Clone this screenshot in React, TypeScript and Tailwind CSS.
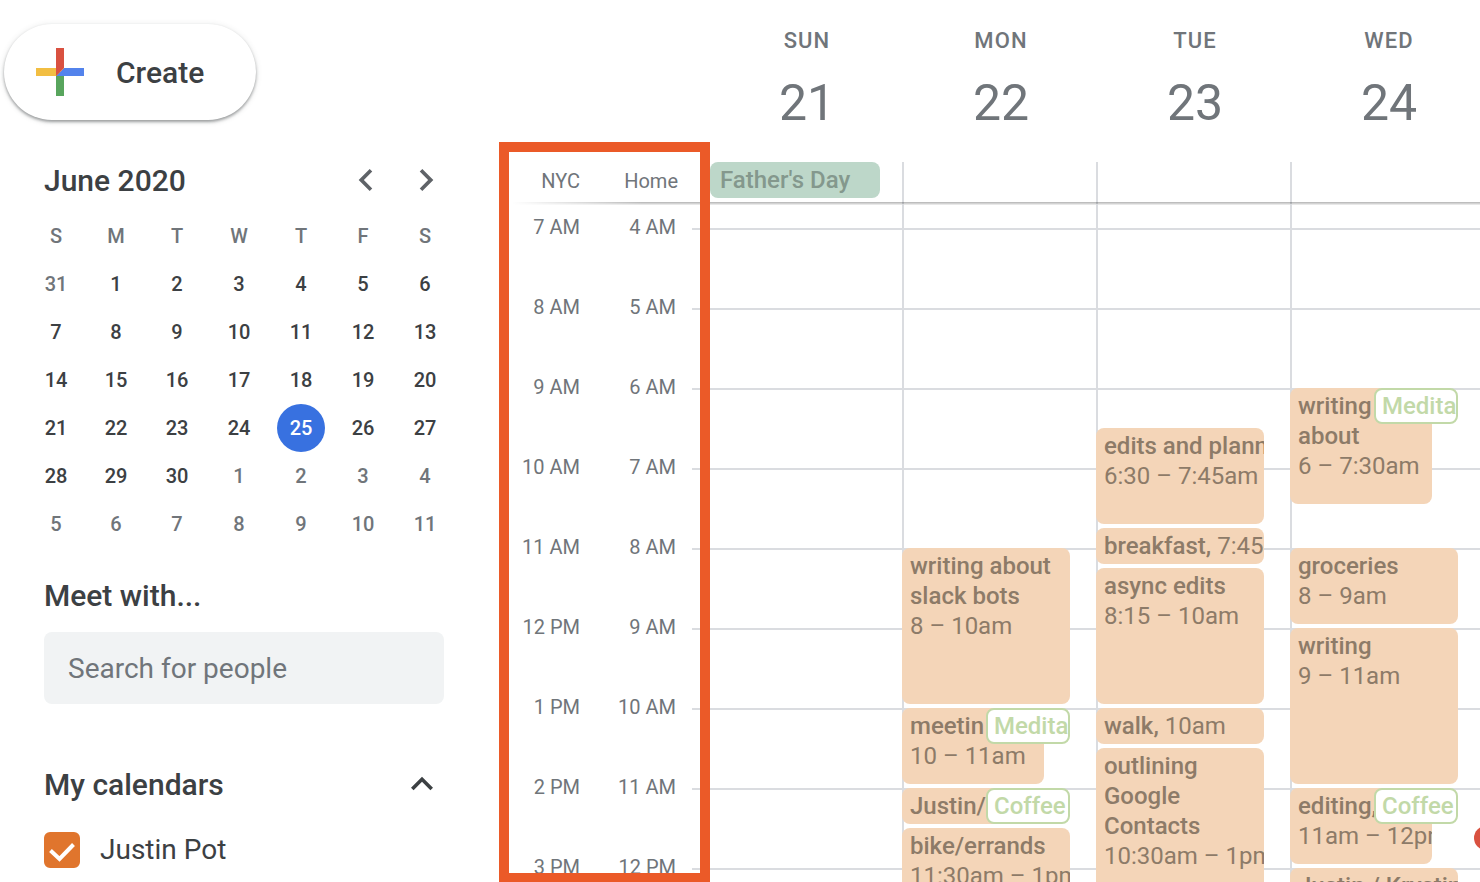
import { useState } from "react";

type CalendarEvent = {
  title: string;
  time?: string;
  start: number;
  end: number;
  half?: boolean;
  nowrap?: boolean;
  inline?: boolean;
  invite?: boolean;
};

type Day = {
  name: string;
  date: number;
  allDay?: string;
  now?: number;
  events: CalendarEvent[];
};

const HOUR = 80;
const FIRST_HOUR = 4;
const TOP_GAP = 24;

const days: Day[] = [
  { name: "SUN", date: 21, allDay: "Father's Day", events: [] },
  {
    name: "MON",
    date: 22,
    events: [
      { title: "writing about slack bots", time: "8 – 10am", start: 8, end: 10 },
      { title: "meetin", time: "10 – 11am", start: 10, end: 11, half: true, nowrap: true },
      { title: "Medita", start: 10, end: 10.5, invite: true },
      { title: "Justin/", start: 11, end: 11.5, half: true, nowrap: true },
      { title: "Coffee", start: 11, end: 11.5, invite: true },
      { title: "bike/errands", time: "11:30am – 1pm", start: 11.5, end: 13 },
    ],
  },
  {
    name: "TUE",
    date: 23,
    events: [
      { title: "edits and planning", time: "6:30 – 7:45am", start: 6.5, end: 7.75, nowrap: true },
      { title: "breakfast", time: "7:45am", start: 7.75, end: 8.25, inline: true },
      { title: "async edits", time: "8:15 – 10am", start: 8.25, end: 10 },
      { title: "walk", time: "10am", start: 10, end: 10.5, inline: true },
      { title: "outlining Google Contacts", time: "10:30am – 1pm", start: 10.5, end: 13 },
    ],
  },
  {
    name: "WED",
    date: 24,
    now: 11.625,
    events: [
      { title: "writing about", time: "6 – 7:30am", start: 6, end: 7.5, half: true },
      { title: "Medita", start: 6, end: 6.5, invite: true },
      { title: "groceries", time: "8 – 9am", start: 8, end: 9 },
      { title: "writing", time: "9 – 11am", start: 9, end: 11 },
      { title: "editing,", time: "11am – 12pm", start: 11, end: 12, half: true, nowrap: true },
      { title: "Coffee", start: 11, end: 11.5, invite: true },
      { title: "Justin / Krystina", start: 12, end: 13, nowrap: true },
    ],
  },
];

const hours = [
  ["7 AM", "4 AM"],
  ["8 AM", "5 AM"],
  ["9 AM", "6 AM"],
  ["10 AM", "7 AM"],
  ["11 AM", "8 AM"],
  ["12 PM", "9 AM"],
  ["1 PM", "10 AM"],
  ["2 PM", "11 AM"],
  ["3 PM", "12 PM"],
];

const weeks = [
  [31, 1, 2, 3, 4, 5, 6],
  [7, 8, 9, 10, 11, 12, 13],
  [14, 15, 16, 17, 18, 19, 20],
  [21, 22, 23, 24, 25, 26, 27],
  [28, 29, 30, 1, 2, 3, 4],
  [5, 6, 7, 8, 9, 10, 11],
];

const topFor = (hour: number) => TOP_GAP + (hour - FIRST_HOUR) * HOUR;

const PlusIcon = () => (
  <svg className="size-12" viewBox="6 6 24 24" aria-hidden="true">
    <path fill="#58a55d" d="M16 16v14h4V20z" />
    <path fill="#5383ec" d="M30 16H20l-4 4h14z" />
    <path fill="#f2be42" d="M6 16v4h10l4-4z" />
    <path fill="#d95140" d="M20 16V6h-4v14z" />
  </svg>
);

const Chevron = ({ d }: { d: string }) => (
  <svg className="size-[22px]" viewBox="6 6 12 12" fill="currentColor" aria-hidden="true">
    <path d={d} />
  </svg>
);

const MiniCalendar = () => (
  <table className="ml-[26px] w-[430px] table-fixed text-xl font-medium">
    <colgroup>
      <col span={2} className="w-[60px]" />
      <col span={5} className="w-[62px]" />
    </colgroup>
    <thead>
      <tr className="h-12 text-[#70757a]">
        {["S", "M", "T", "W", "T", "F", "S"].map((d, i) => (
          <th key={i} scope="col" className="p-0 font-medium">
            {d}
          </th>
        ))}
      </tr>
    </thead>
    <tbody>
      {weeks.map((week, w) => (
        <tr key={w} className="h-12">
          {week.map((day) => {
            const outside = (w === 0 && day > 20) || (w > 3 && day < 20);
            const today = !outside && day === 25;
            return (
              <td key={day} className="p-0 text-center">
                <button
                  className={
                    today
                      ? "size-12 rounded-full bg-[#3871e0] text-white"
                      : outside
                        ? "size-12 rounded-full text-[#70757a]"
                        : "size-12 rounded-full text-[#3c4043]"
                  }
                >
                  {day}
                </button>
              </td>
            );
          })}
        </tr>
      ))}
    </tbody>
  </table>
);

const Sidebar = () => {
  const [checked, setChecked] = useState(true);

  return (
    <aside className="w-[500px] shrink-0 pt-6 text-[#3c4043]">
      <button className="ml-1 flex h-24 w-[252px] items-center gap-8 rounded-full bg-white pl-8 text-[30px] font-medium shadow-[0_2px_3px_rgba(60,64,67,0.45),0_1px_6px_rgba(60,64,67,0.15)]">
        <PlusIcon />
        Create
      </button>

      <div className="mt-10 mr-14 ml-11 flex h-10 items-center justify-between">
        <h2 className="text-[30px] font-medium">June 2020</h2>
        <div className="flex gap-[38px] pr-[7px] text-[#5f6368]">
          <button aria-label="Previous month">
            <Chevron d="M15.41 7.41 14 6l-6 6 6 6 1.41-1.41L10.83 12z" />
          </button>
          <button aria-label="Next month">
            <Chevron d="M10 6 8.59 7.41 13.17 12l-4.58 4.59L10 18l6-6z" />
          </button>
        </div>
      </div>

      <div className="mt-3">
        <MiniCalendar />
      </div>

      <div className="mt-7 mr-14 ml-11">
        <label htmlFor="people" className="block text-[30px] leading-10 font-medium">
          Meet with...
        </label>
        <input
          id="people"
          type="text"
          placeholder="Search for people"
          className="mt-4 h-[72px] w-full rounded-lg bg-[#f1f3f4] px-6 text-[28px] outline-none placeholder:text-[#70757a]"
        />

        <div className="mt-[60px] flex h-10 items-center justify-between pr-[11px]">
          <h2 className="text-[30px] font-medium">My calendars</h2>
          <button aria-label="Collapse my calendars">
            <Chevron d="m12 8-6 6 1.41 1.41L12 10.83l4.59 4.58L18 14z" />
          </button>
        </div>

        <label className="mt-[26px] flex h-10 items-center gap-5 text-[28px]">
          <span className="relative size-9">
            <input
              type="checkbox"
              checked={checked}
              onChange={() => setChecked(!checked)}
              className="block size-9 appearance-none rounded-md border-4 border-[#e0752d] checked:bg-[#e0752d]"
            />
            {checked && (
              <svg
                className="pointer-events-none absolute inset-0 size-9"
                viewBox="0 0 36 36"
                fill="none"
                stroke="#fff"
                strokeWidth="4"
                aria-hidden="true"
              >
                <path d="M6.500 18.500 15.500 27 29.500 12.500" />
              </svg>
            )}
          </span>
          Justin Pot
        </label>
      </div>
    </aside>
  );
};

const EventBlock = ({ event }: { event: CalendarEvent }) => {
  const style = { top: topFor(event.start), height: (event.end - event.start) * HOUR - 4 };

  if (event.invite) {
    return (
      <button
        style={style}
        className="absolute right-[26px] w-[84px] overflow-hidden rounded-lg border-2 border-[#c2d9a8] bg-white pl-1.5 text-left leading-[30px] font-medium whitespace-nowrap text-[#c2d9a8]"
      >
        {event.title}
      </button>
    );
  }

  return (
    <button
      style={style}
      className={`absolute left-0 flex flex-col items-start overflow-hidden rounded-lg bg-[#f4d5b8] py-[3px] pl-2 text-left leading-[30px] text-[#8d7b68] ${
        event.half ? "right-[52px]" : "right-[26px]"
      }`}
    >
      {event.inline ? (
        <span className="whitespace-nowrap">
          <span className="font-medium">{event.title},</span> {event.time}
        </span>
      ) : (
        <>
          <span className={event.nowrap ? "font-medium whitespace-nowrap" : "font-medium"}>
            {event.title}
          </span>
          <span className="whitespace-nowrap">{event.time}</span>
        </>
      )}
    </button>
  );
};

const WeekView = () => (
  <main className="relative flex min-w-0 flex-1 flex-col">
    <header className="relative flex text-[#70757a]">
      <div className="flex w-52 shrink-0 items-end pb-[11px] text-xl leading-6">
        <span className="w-20 text-right">NYC</span>
        <span className="w-[98px] text-right">Home</span>
      </div>
      {days.map((day) => (
        <div key={day.name} className="min-w-[194px] flex-1">
          <div className="flex h-[162px] flex-col items-center pt-[25px] pl-1">
            <span className="text-[22px] leading-8 font-medium tracking-wider">{day.name}</span>
            <span className="mt-4 text-[50px] leading-[60px]">{day.date}</span>
          </div>
          <div className="h-[42px] border-l-2 border-[#dadce0]">
            {day.allDay && (
              <button className="block h-9 w-[170px] rounded-lg bg-[#bdd7c9] pl-2.5 text-left text-2xl font-medium text-[#84988d]">
                {day.allDay}
              </button>
            )}
          </div>
        </div>
      ))}
      <div className="absolute right-0 -bottom-px left-3 h-[3px] bg-linear-to-b from-black/30 to-black/5 mask-[linear-gradient(to_right,transparent,black_130px)]" />
    </header>

    <div className="flex text-2xl">
      <div className="flex w-52 shrink-0 justify-between text-xl leading-6 text-[#70757a]">
        <div className="pt-[11px]">
          {hours.map(([nyc, home]) => (
            <div key={nyc} className="flex h-20">
              <span className="w-20 text-right">{nyc}</span>
              <span className="w-24 text-right">{home}</span>
            </div>
          ))}
        </div>
        <div className="w-4 pt-6">
          {hours.map(([nyc]) => (
            <div key={nyc} className="h-20 border-t-2 border-[#dadce0]" />
          ))}
        </div>
      </div>

      {days.map((day) => (
        <section key={day.name} className="relative min-w-[194px] flex-1">
          <div className="border-l-2 border-[#dadce0] pt-6">
            {hours.map(([nyc]) => (
              <div key={nyc} className="h-20 border-t-2 border-[#dadce0]" />
            ))}
          </div>
          {day.events.map((event) => (
            <EventBlock key={`${event.title}-${event.start}`} event={event} />
          ))}
          {day.now && (
            <span
              style={{ top: topFor(day.now) - 12 }}
              className="absolute -right-3.5 size-6 rounded-full bg-[#d95140]"
            />
          )}
        </section>
      ))}
    </div>

    {/* Highlight around the two time zone columns */}
    <div className="pointer-events-none absolute top-[142px] -bottom-px -left-px w-[211px] border-10 border-[#eb5a28]" />
  </main>
);

export default function App() {
  return (
    <div className="flex h-screen overflow-hidden bg-white font-[Roboto,sans-serif]">
      <Sidebar />
      <WeekView />
    </div>
  );
}
